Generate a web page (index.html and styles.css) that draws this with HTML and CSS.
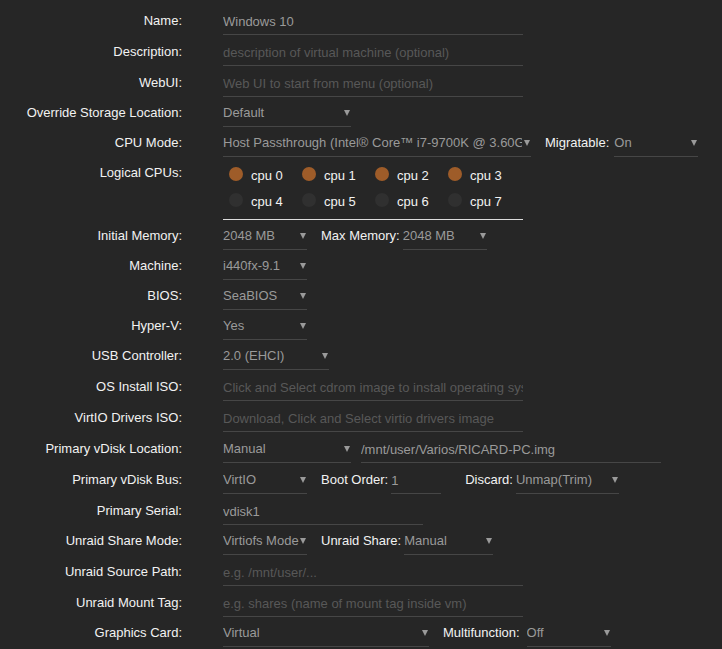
FILE: index.html
```html
<!DOCTYPE html>
<html lang="en">
<head>
    <meta charset="UTF-8">
    <meta name="viewport" content="width=device-width, initial-scale=1.0">
    <title>VM Settings</title>
    <link rel="stylesheet" href="styles.css">
</head>
<body>

    <form class="vm-form">
        <div class="row text">
            <label class="key">Name:</label>
            <input class="field w300" type="text" value="Windows 10">
        </div>
        <div class="row text">
            <label class="key">Description:</label>
            <input class="field w300" type="text" placeholder="description of virtual machine (optional)">
        </div>
        <div class="row text">
            <label class="key">WebUI:</label>
            <input class="field w300" type="text" placeholder="Web UI to start from menu (optional)">
        </div>
        <div class="row">
            <label class="key">Override Storage Location:</label>
            <span class="sel w128"><select class="field"><option>Default</option></select></span>
        </div>
        <div class="row">
            <label class="key">CPU Mode:</label>
            <span class="sel w308"><select class="field clip"><option>Host Passthrough (Intel® Core™ i7-9700K @ 3.60GHz)</option></select></span>
            <span class="sub">Migratable:</span>
            <span class="sel w84 gap5"><select class="field"><option>On</option></select></span>
        </div>
        <div class="row">
            <label class="key">Logical CPUs:</label>
            <div class="cpus">
                <label class="cpu"><span class="dot on"></span>cpu 0</label>
                <label class="cpu"><span class="dot on"></span>cpu 1</label>
                <label class="cpu"><span class="dot on"></span>cpu 2</label>
                <label class="cpu"><span class="dot on"></span>cpu 3</label>
                <label class="cpu"><span class="dot"></span>cpu 4</label>
                <label class="cpu"><span class="dot"></span>cpu 5</label>
                <label class="cpu"><span class="dot"></span>cpu 6</label>
                <label class="cpu"><span class="dot"></span>cpu 7</label>
            </div>
        </div>
        <div class="row">
            <label class="key">Initial Memory:</label>
            <span class="sel w84"><select class="field"><option>2048 MB</option></select></span>
            <span class="sub">Max Memory:</span>
            <span class="sel w84"><select class="field"><option>2048 MB</option></select></span>
        </div>
        <div class="row">
            <label class="key">Machine:</label>
            <span class="sel w84"><select class="field"><option>i440fx-9.1</option></select></span>
        </div>
        <div class="row">
            <label class="key">BIOS:</label>
            <span class="sel w84"><select class="field"><option>SeaBIOS</option></select></span>
        </div>
        <div class="row">
            <label class="key">Hyper-V:</label>
            <span class="sel w84"><select class="field"><option>Yes</option></select></span>
        </div>
        <div class="row">
            <label class="key">USB Controller:</label>
            <span class="sel w106"><select class="field"><option>2.0 (EHCI)</option></select></span>
        </div>
        <div class="row text">
            <label class="key">OS Install ISO:</label>
            <input class="field w300" type="text" placeholder="Click and Select cdrom image to install operating system">
        </div>
        <div class="row text">
            <label class="key">VirtIO Drivers ISO:</label>
            <input class="field w300" type="text" placeholder="Download, Click and Select virtio drivers image">
        </div>
        <div class="row text">
            <label class="key">Primary vDisk Location:</label>
            <span class="sel w128"><select class="field"><option>Manual</option></select></span>
            <input class="field w300 path" type="text" value="/mnt/user/Varios/RICARD-PC.img">
        </div>
        <div class="row text">
            <label class="key">Primary vDisk Bus:</label>
            <span class="sel w84"><select class="field"><option>VirtIO</option></select></span>
            <span class="sub">Boot Order:</span>
            <input class="field w50" type="text" value="1">
            <span class="sub wide">Discard:</span>
            <span class="sel w103"><select class="field"><option>Unmap(Trim)</option></select></span>
        </div>
        <div class="row text">
            <label class="key">Primary Serial:</label>
            <input class="field w200" type="text" value="vdisk1">
        </div>
        <div class="row">
            <label class="key">Unraid Share Mode:</label>
            <span class="sel w84"><select class="field"><option>Virtiofs Mode</option></select></span>
            <span class="sub">Unraid Share:</span>
            <span class="sel w89"><select class="field"><option>Manual</option></select></span>
        </div>
        <div class="row text">
            <label class="key">Unraid Source Path:</label>
            <input class="field w300" type="text" placeholder="e.g. /mnt/user/...">
        </div>
        <div class="row text">
            <label class="key">Unraid Mount Tag:</label>
            <input class="field w300" type="text" placeholder="e.g. shares (name of mount tag inside vm)">
        </div>
        <div class="row">
            <label class="key">Graphics Card:</label>
            <span class="sel w206"><select class="field"><option>Virtual</option></select></span>
            <span class="sub">Multifunction:</span>
            <span class="sel w84 gap7"><select class="field"><option>Off</option></select></span>
        </div>
    </form>

</body>
</html>
```

FILE: styles.css
```css
body {
    margin: 0;
    background-color: #262626;
    color: #f2f2f2;
    font-family: "Liberation Sans", Arial, sans-serif;
    font-size: 13px;
    overflow: hidden;
}
.vm-form {
    padding-top: 4px;
}
.row {
    display: flex;
    align-items: flex-start;
}
.row.text {
    padding-top: 1px;
}
.key {
    flex: none;
    width: 182px;
    margin-right: 41px;
    text-align: right;
    padding-top: 6px;
    line-height: 20px;
}
.field {
    display: block;
    box-sizing: border-box;
    height: 30px;
    margin: 0;
    padding: 6px 0 3px;
    border: none;
    border-bottom: 1px solid #464646;
    border-radius: 0;
    background: transparent;
    color: #9a9a9a;
    font: inherit;
    line-height: 20px;
    outline: none;
}
.field::placeholder {
    color: #585858;
}
select.field {
    -webkit-appearance: none;
    appearance: none;
    width: 100%;
    padding-right: 5px;
}
select.field.clip {
    padding-right: 9px;
}
.sel {
    position: relative;
    flex: none;
}
.sel::after {
    content: "";
    position: absolute;
    right: 1px;
    top: 13px;
    border-left: 3px solid transparent;
    border-right: 3px solid transparent;
    border-top: 6px solid #9a9a9a;
    pointer-events: none;
}
.sub {
    flex: none;
    padding-top: 6px;
    line-height: 20px;
    margin: 0 3px 0 14px;
}
.sub.wide {
    margin-left: 24px;
}
.gap5 { margin-left: 2px; }
.gap7 { margin-left: 4px; }
.w50 { width: 50px; }
.w84 { width: 84px; }
.w89 { width: 89px; }
.w103 { width: 103px; }
.w106 { width: 106px; }
.w128 { width: 128px; }
.w200 { width: 200px; }
.w206 { width: 206px; }
.w300 { width: 300px; }
.w308 { width: 308px; }
.path {
    margin-left: 10px;
}
.cpus {
    display: grid;
    grid-template-columns: repeat(4, 73px);
    grid-auto-rows: 26px;
    width: 300px;
    box-sizing: border-box;
    padding: 4px 0 6px 6px;
    border-bottom: 1px solid #dcdcdc;
}
.cpu {
    display: flex;
    align-items: flex-start;
    padding-top: 5px;
    line-height: 20px;
}
.dot {
    width: 14px;
    height: 14px;
    margin-top: 1px;
    border-radius: 50%;
    background-color: #303030;
    margin-right: 8px;
}
.dot.on {
    background-color: #9e5c29;
}
```
